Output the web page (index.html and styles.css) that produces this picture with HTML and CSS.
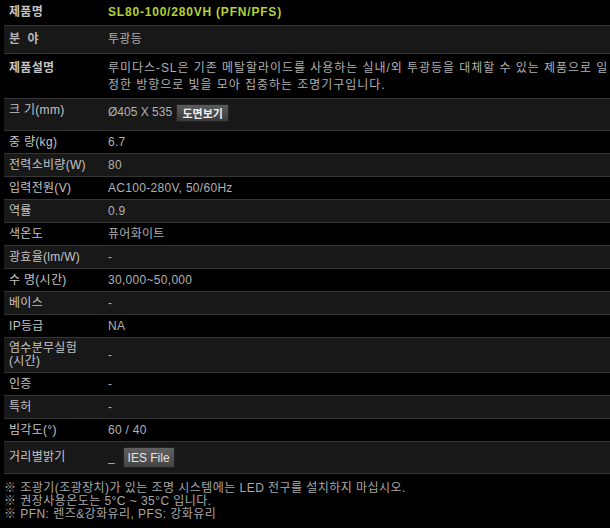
FILE: index.html
```html
<!DOCTYPE html>
<html lang="ko">

<head>
  <meta charset="UTF-8" />
  <title>SL80-100/280VH 제품정보</title>
  <link rel="stylesheet" href="styles.css">
</head>

<body>
  <div class="spec">
    <div class="row title">
      <div class="label">제품명</div>
      <div class="value">SL80-100/280VH (PFN/PFS)</div>
    </div>
    <div class="row odd sub">
      <div class="label">분&nbsp;&nbsp;야</div>
      <div class="value">투광등</div>
    </div>
    <div class="row desc">
      <div class="label">제품설명</div>
      <div class="value">루미다스-SL은 기존 메탈할라이드를 사용하는 실내/외 투광등을 대체할 수 있는 제품으로 일정한 방향으로 빛을 모아 집중하는 조명기구입니다.</div>
    </div>
    <div class="row odd size">
      <div class="label">크 기(mm)</div>
      <div class="value">Ø405 X 535 <button class="btn">도면보기</button></div>
    </div>
    <div class="row">
      <div class="label">중 량(kg)</div>
      <div class="value">6.7</div>
    </div>
    <div class="row odd">
      <div class="label">전력소비량(W)</div>
      <div class="value">80</div>
    </div>
    <div class="row">
      <div class="label">입력전원(V)</div>
      <div class="value">AC100-280V, 50/60Hz</div>
    </div>
    <div class="row odd">
      <div class="label">역률</div>
      <div class="value">0.9</div>
    </div>
    <div class="row">
      <div class="label">색온도</div>
      <div class="value">퓨어화이트</div>
    </div>
    <div class="row odd">
      <div class="label">광효율(lm/W)</div>
      <div class="value">-</div>
    </div>
    <div class="row">
      <div class="label">수 명(시간)</div>
      <div class="value">30,000~50,000</div>
    </div>
    <div class="row odd">
      <div class="label">베이스</div>
      <div class="value">-</div>
    </div>
    <div class="row">
      <div class="label">IP등급</div>
      <div class="value">NA</div>
    </div>
    <div class="row odd tall">
      <div class="label">염수분무실험<br>(시간)</div>
      <div class="value">-</div>
    </div>
    <div class="row">
      <div class="label">인증</div>
      <div class="value">-</div>
    </div>
    <div class="row odd">
      <div class="label">특허</div>
      <div class="value">-</div>
    </div>
    <div class="row">
      <div class="label">빔각도(°)</div>
      <div class="value">60 / 40</div>
    </div>
    <div class="row odd ies">
      <div class="label">거리별밝기</div>
      <div class="value">_ <button class="btn btn-ies">IES File</button></div>
    </div>
  </div>

  <div class="notes">
    <p>※ 조광기(조광장치)가 있는 조명 시스템에는 LED 전구를 설치하지 마십시오.</p>
    <p>※ 권장사용온도는 5°C ~ 35°C 입니다.</p>
    <p>※ PFN: 렌즈&amp;강화유리, PFS: 강화유리</p>
  </div>
</body>

</html>
```

FILE: styles.css
```css
body {
  margin: 0;
  padding: 0;
  background-color: #000;
  color: #aaa;
  font-family: "Liberation Sans", "Noto Sans CJK KR", sans-serif;
  font-size: 12px;
  overflow: hidden;
}

.spec {
  margin-left: 4px;
  width: 620px;
}

.row {
  display: flex;
  align-items: center;
  box-sizing: border-box;
  height: 23px;
  border-bottom: 1px solid #353535;
  line-height: 15px;
}

.row.odd {
  background-color: #181818;
}

.label {
  width: 104px;
  padding-left: 5px;
  box-sizing: border-box;
  color: #c4c4c4;
  letter-spacing: 0.3px;
  flex-shrink: 0;
}

.value {
  flex: 1;
  padding-right: 14px;
  color: #b0b0b0;
  letter-spacing: 0.3px;
}

.title {
  height: 26px;
}

.title .label,
.title .value {
  font-weight: bold;
}

.title .value {
  color: #b4d233;
  letter-spacing: 0.8px;
}

.sub {
  height: 28px;
}

.sub .label {
  font-weight: bold;
  color: #b8b8b8;
}

.desc {
  height: 45px;
  align-items: flex-start;
  padding-top: 6px;
  line-height: 17px;
}

.desc .label {
  font-weight: bold;
}

.desc .value {
  letter-spacing: 0.95px;
}

.size {
  height: 32px;
  align-items: flex-start;
}

.size .label {
  padding-top: 4px;
}

.size .value {
  padding-top: 5px;
  letter-spacing: 0;
}

.tall {
  height: 35px;
}

.tall .label {
  line-height: 13px;
}

.ies {
  height: 32px;
}

.btn {
  height: 18px;
  padding: 0 5px;
  margin-left: 1px;
  border: 1px solid #222;
  border-radius: 1px;
  background: linear-gradient(#5c5c5c, #3a3a3a);
  color: #f0f0f0;
  font-family: "Noto Sans CJK KR", sans-serif;
  font-size: 11px;
  font-weight: bold;
  line-height: 14px;
  letter-spacing: 0;
  vertical-align: middle;
  white-space: nowrap;
}

.btn-ies {
  height: 21px;
  width: 52px;
  padding: 0;
  margin-left: 4px;
  font-family: "Liberation Sans", Arial, sans-serif;
  font-size: 12px;
  font-weight: normal;
  color: #e4e4e4;
  background: linear-gradient(#606060, #444);
}

.notes {
  padding: 8px 0 0 4px;
  color: #a8a8a8;
  line-height: 13px;
  letter-spacing: 0.45px;
}

.notes p {
  margin: 0;
}
```
